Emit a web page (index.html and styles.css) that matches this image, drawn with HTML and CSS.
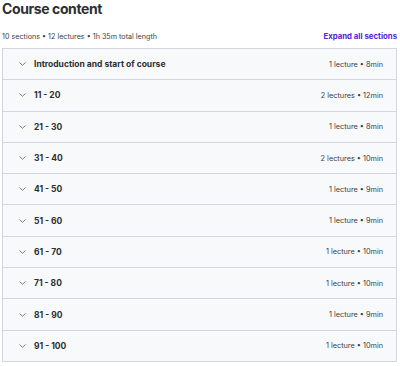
FILE: index.html
```html
<!DOCTYPE html>
<html lang="en">
<head>
	<meta charset="UTF-8">
	<title>Course content</title>
	<link rel="stylesheet" href="styles.css">
</head>
<body>
	<div class="curriculum">
		<h2 class="cur_title">Course content</h2>
		<div class="cur_meta">
			<span class="cur_stats">10 sections • 12 lectures • 1h 35m total length</span>
			<span class="cur_expand">Expand all sections</span>
		</div>
		<div class="cur_list">
			<div class="cur_row"><svg class="cur_chev" viewBox="0 0 7 4"><path d="M0.5 0.5 L3.5 3.3 L6.5 0.5"/></svg><span class="cur_name">Introduction and start of course</span><span class="cur_info">1 lecture • 8min</span></div>
			<div class="cur_row"><svg class="cur_chev" viewBox="0 0 7 4"><path d="M0.5 0.5 L3.5 3.3 L6.5 0.5"/></svg><span class="cur_name">11 - 20</span><span class="cur_info">2 lectures • 12min</span></div>
			<div class="cur_row"><svg class="cur_chev" viewBox="0 0 7 4"><path d="M0.5 0.5 L3.5 3.3 L6.5 0.5"/></svg><span class="cur_name">21 - 30</span><span class="cur_info">1 lecture • 8min</span></div>
			<div class="cur_row"><svg class="cur_chev" viewBox="0 0 7 4"><path d="M0.5 0.5 L3.5 3.3 L6.5 0.5"/></svg><span class="cur_name">31 - 40</span><span class="cur_info">2 lectures • 10min</span></div>
			<div class="cur_row"><svg class="cur_chev" viewBox="0 0 7 4"><path d="M0.5 0.5 L3.5 3.3 L6.5 0.5"/></svg><span class="cur_name">41 - 50</span><span class="cur_info">1 lecture • 9min</span></div>
			<div class="cur_row"><svg class="cur_chev" viewBox="0 0 7 4"><path d="M0.5 0.5 L3.5 3.3 L6.5 0.5"/></svg><span class="cur_name">51 - 60</span><span class="cur_info">1 lecture • 9min</span></div>
			<div class="cur_row"><svg class="cur_chev" viewBox="0 0 7 4"><path d="M0.5 0.5 L3.5 3.3 L6.5 0.5"/></svg><span class="cur_name">61 - 70</span><span class="cur_info">1 lecture • 10min</span></div>
			<div class="cur_row"><svg class="cur_chev" viewBox="0 0 7 4"><path d="M0.5 0.5 L3.5 3.3 L6.5 0.5"/></svg><span class="cur_name">71 - 80</span><span class="cur_info">1 lecture • 10min</span></div>
			<div class="cur_row"><svg class="cur_chev" viewBox="0 0 7 4"><path d="M0.5 0.5 L3.5 3.3 L6.5 0.5"/></svg><span class="cur_name">81 - 90</span><span class="cur_info">1 lecture • 9min</span></div>
			<div class="cur_row"><svg class="cur_chev" viewBox="0 0 7 4"><path d="M0.5 0.5 L3.5 3.3 L6.5 0.5"/></svg><span class="cur_name">91 - 100</span><span class="cur_info">1 lecture • 10min</span></div>
		</div>
	</div>
</body>
</html>
```

FILE: styles.css
```css
body {
	margin:0;
	background:#fff;
	font-family:Inter, "Liberation Sans", sans-serif;
	color:#2d2f31;
}
.curriculum {
	padding:0 3px 0 2px;
}
.cur_title {
	margin:0;
	font-size:14px;
	line-height:18px;
	font-weight:700;
	letter-spacing:-0.4px;
}
.cur_meta {
	display:flex;
	justify-content:space-between;
	align-items:center;
	margin-top:11px;
	height:14px;
	font-size:7.2px;
}
.cur_stats {
	color:#3e4143;
}
.cur_expand {
	color:#5624d0;
	font-weight:700;
	font-size:7.8px;
}
.cur_list {
	margin-top:5px;
	border:1px solid #d1d7dc;
	border-bottom:0;
}
.cur_row {
	display:flex;
	align-items:center;
	height:30.3px;
	padding:0 13px 0 16px;
	background:#f7f9fa;
	border-bottom:1px solid #d1d7dc;
}
.cur_chev {
	width:7px;
	height:4px;
	margin:0 8px 0 0;
	fill:none;
	stroke:#6a6f73;
	stroke-width:0.9;
}
.cur_name {
	flex:1;
	font-size:8.5px;
	font-weight:700;
}
.cur_info {
	font-size:7.3px;
	color:#3e4143;
}
```
